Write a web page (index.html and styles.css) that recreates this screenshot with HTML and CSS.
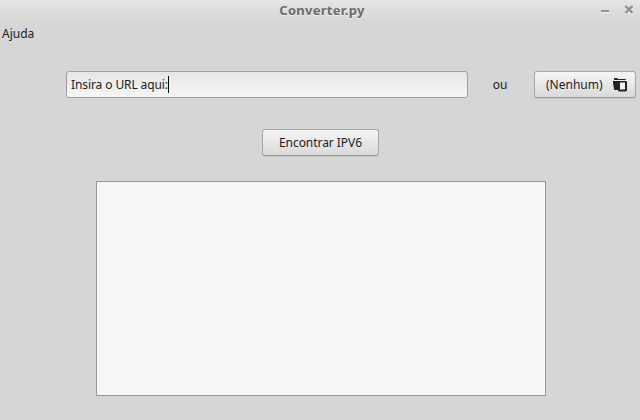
FILE: index.html
```html
<!DOCTYPE html>
<html lang="pt">
<head>
<meta charset="utf-8">
<title>Converter.py</title>
<link rel="stylesheet" href="styles.css">
</head>
<body>
<div class="window">
  <header class="titlebar">
    <h1 class="title">Converter.py</h1>
    <div class="controls">
      <svg class="control" width="10" height="10" viewBox="0 0 10 10"><path d="M1 7.5h8" stroke="#f2f2f2"/><path d="M1 6h8" stroke="#929292" stroke-width="2"/></svg>
      <svg class="control" width="10" height="10" viewBox="0 0 10 10"><path d="M1.5 2.5l7 7m0-7l-7 7" stroke="#efefef" stroke-width="2"/><path d="M1.5 1l7 7m0-7l-7 7" stroke="#8f8f8f" stroke-width="2.4"/></svg>
    </div>
  </header>
  <nav class="menubar"><span>Ajuda</span></nav>
  <div class="row">
    <div class="entry"><span class="entry-text">Insira o URL aqui:</span></div>
    <span class="or">ou</span>
    <button class="button chooser"><span>(Nenhum)</span>
      <svg width="14" height="14" viewBox="0 0 14 14"><path d="M1 1q0-1 1-1h2l1 1h7q1 0 1 1H1z" fill="#212121"/><path d="M0 3h13q1 0 1 1v8q0 1.5-1.5 1.5h-6Q5 13.500 5 12H2q-1 0-1-1L0 5z" fill="#212121"/><path d="M7 4.500h5v7H7z" fill="#efefef"/></svg>
    </button>
  </div>
  <button class="button find">Encontrar IPV6</button>
  <div class="output"></div>
</div>
</body>
</html>
```
FILE: styles.css
```css
* { box-sizing: border-box; }
body { margin: 0; background: #d6d6d6; font: 12px "Noto Sans", sans-serif; color: #212121; }
.window { width: 640px; height: 420px; overflow: hidden; }
.titlebar { display: grid; grid-template-columns: 78px 1fr 78px; height: 22px; background: linear-gradient(#e5e5e5, #d6d6d6); }
.title { grid-column: 2; margin: 0; padding-left: 4px; text-align: center; font-size: 13px; letter-spacing: .28px; line-height: 21px; font-weight: 700; color: #6c6c6c; text-shadow: 0 1px #eee; }
.controls { display: flex; justify-content: flex-end; gap: 14px; padding: 5px 6px 0 0; }
.menubar { height: 49px; padding: 4px 0 0 2px; line-height: 16px; }
.row { display: flex; height: 27px; padding-left: 66px; }
.entry { width: 402px; height: 27px; padding: 4px; border: 1px solid #a0a0a0; border-radius: 3px; background: linear-gradient(#e6e6e6, #f6f6f6); }
.entry-text { display: inline-block; border-right: 1px solid #000; line-height: 17px; letter-spacing: -.1px; }
.or { width: 66px; padding-right: 2px; text-align: center; line-height: 27px; }
.button { margin: 0; padding: 0 0 1px; height: 27px; font: inherit; color: inherit; border: 1px solid #a6a6a6; border-bottom-color: #999; border-radius: 3px; background: linear-gradient(#f6f6f6, #d9d9d9); box-shadow: 0 1px #c9c9c9; }
.chooser { display: flex; align-items: center; width: 102px; padding: 0 8px 0 11px; justify-content: space-between; }
.find { display: block; width: 117px; margin: 31px 0 0 262px; letter-spacing: -.05px; }
.output { width: 450px; height: 215px; margin: 25px 0 0 96px; border: 1px solid #979797; background: #f6f6f6; }
```
